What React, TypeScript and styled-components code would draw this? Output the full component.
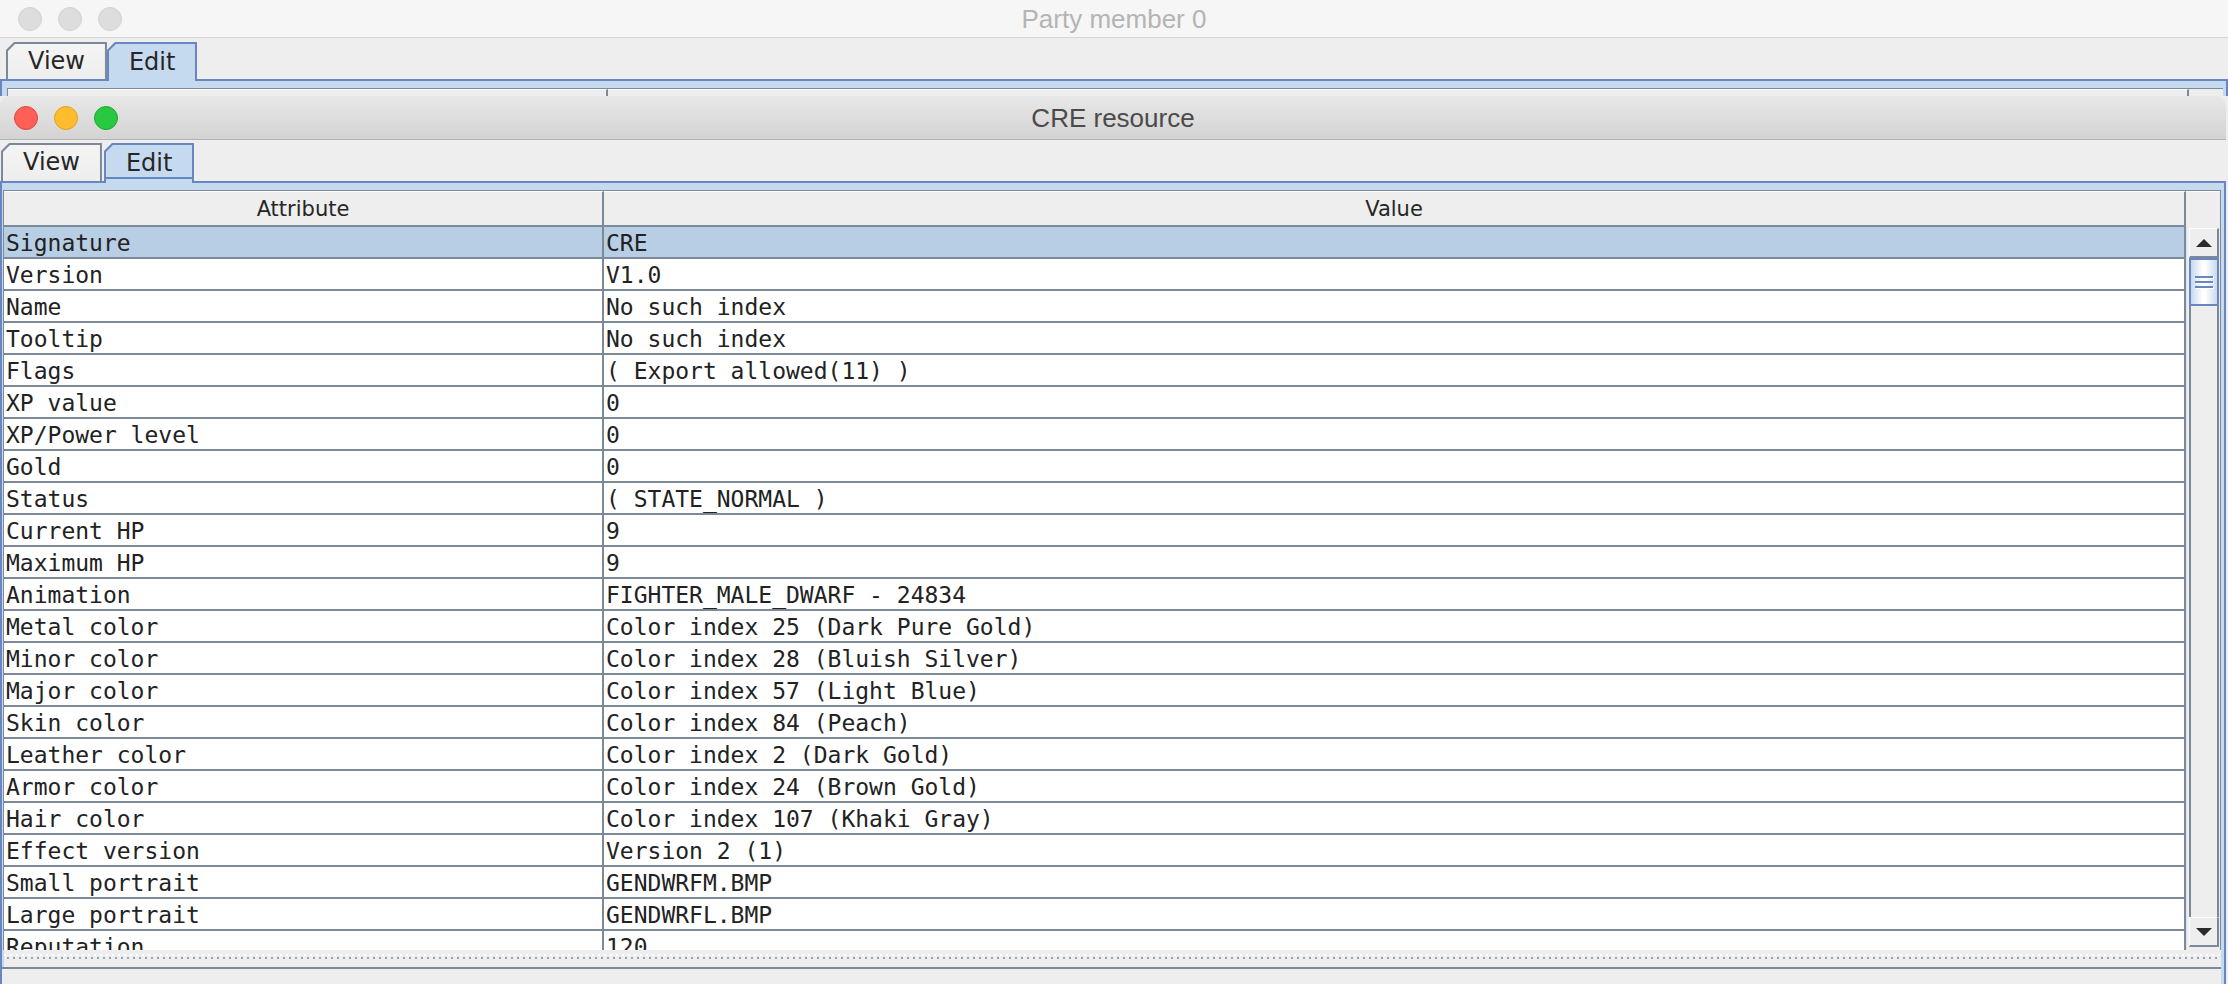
import React from "react";
import styled, { createGlobalStyle } from "styled-components";

const BLUE = "#6a86c1";
const LIGHT_BLUE = "#c6daef";
const GRID = "#7b8998";
const PANEL = "#eeeeee";

const rows: [string, string][] = [
  ["Signature", "CRE"],
  ["Version", "V1.0"],
  ["Name", "No such index"],
  ["Tooltip", "No such index"],
  ["Flags", "( Export allowed(11) )"],
  ["XP value", "0"],
  ["XP/Power level", "0"],
  ["Gold", "0"],
  ["Status", "( STATE_NORMAL )"],
  ["Current HP", "9"],
  ["Maximum HP", "9"],
  ["Animation", "FIGHTER_MALE_DWARF - 24834"],
  ["Metal color", "Color index 25 (Dark Pure Gold)"],
  ["Minor color", "Color index 28 (Bluish Silver)"],
  ["Major color", "Color index 57 (Light Blue)"],
  ["Skin color", "Color index 84 (Peach)"],
  ["Leather color", "Color index 2 (Dark Gold)"],
  ["Armor color", "Color index 24 (Brown Gold)"],
  ["Hair color", "Color index 107 (Khaki Gray)"],
  ["Effect version", "Version 2 (1)"],
  ["Small portrait", "GENDWRFM.BMP"],
  ["Large portrait", "GENDWRFL.BMP"],
  ["Reputation", "120"],
];

const App = () => {
  return (
    <Page>
      <GlobalStyle />
      <BackWindow>
        <TitleBar $active={false}>
          <Lights $inset={18}>
            <Light $fill="#dddddd" $ring="#d2d2d2" />
            <Light $fill="#dddddd" $ring="#d2d2d2" />
            <Light $fill="#dddddd" $ring="#d2d2d2" />
          </Lights>
          <Title $active={false}>Party member 0</Title>
        </TitleBar>
        <TabStrip $inset={6} $gap={0} $height={41}>
          <Tab $height={37}>
            <TabFace>View</TabFace>
          </Tab>
          <Tab $height={37} $selected>
            <TabFace $selected>Edit</TabFace>
          </Tab>
        </TabStrip>
        <TabBody>
          <BackHeader>
            <BackHeaderCell $width={600} />
            <BackHeaderCell $width={1581} />
          </BackHeader>
        </TabBody>
      </BackWindow>

      <FrontWindow>
        <TitleBar $active>
          <Lights $inset={14}>
            <Light $fill="#fe5f57" $ring="#e2463f" />
            <Light $fill="#febc2e" $ring="#dfa123" />
            <Light $fill="#28c840" $ring="#1aab29" />
          </Lights>
          <Title $active>CRE resource</Title>
        </TitleBar>
        <TabStrip $inset={1} $gap={2} $height={41}>
          <Tab $height={38}>
            <TabFace>View</TabFace>
          </Tab>
          <Tab $height={38} $selected>
            <TabFace $selected $focused>
              Edit
            </TabFace>
          </Tab>
        </TabStrip>
        <TabBody $grow>
          <ScrollPane>
            <HeaderRow>
              <HeaderCell $width={600}>Attribute</HeaderCell>
              <HeaderCell>Value</HeaderCell>
              <HeaderCorner />
            </HeaderRow>
            <Viewport>
              <Rows>
                {rows.map(([attr, value], i) => (
                  <Row key={attr} $selected={i === 0}>
                    <AttrCell>{attr}</AttrCell>
                    <ValueCell>{value}</ValueCell>
                  </Row>
                ))}
              </Rows>
              <ScrollBar>
                <ArrowButton>
                  <Arrow $up />
                </ArrowButton>
                <Thumb>
                  <Grip />
                  <Grip />
                  <Grip />
                </Thumb>
                <Track />
                <ArrowButton>
                  <Arrow />
                </ArrowButton>
              </ScrollBar>
            </Viewport>
          </ScrollPane>
          <Divider />
          <BottomPanel />
        </TabBody>
      </FrontWindow>
    </Page>
  );
};

export default App;

const GlobalStyle = createGlobalStyle`
  html, body {
    margin: 0;
    padding: 0;
    overflow: hidden;
    background: ${PANEL};
  }
  * {
    box-sizing: border-box;
  }
`;

const Page = styled.div`
  width: 2228px;
  height: 984px;
  display: flex;
  flex-direction: column;
  overflow: hidden;
  background: ${PANEL};
`;

const BackWindow = styled.div`
  height: 96px;
  flex-shrink: 0;
  overflow: hidden;
  display: flex;
  flex-direction: column;
  background: ${PANEL};
`;

const FrontWindow = styled.div`
  width: 2226px;
  height: 888px;
  display: flex;
  flex-direction: column;
  border-radius: 10px 10px 0 0;
  overflow: hidden;
  background: ${PANEL};
`;

const TitleBar = styled.div<{ $active: boolean }>`
  position: relative;
  flex-shrink: 0;
  height: ${(p) => (p.$active ? "44px" : "38px")};
  display: flex;
  align-items: center;
  justify-content: center;
  border-bottom: 1px solid ${(p) => (p.$active ? "#b3b3b3" : "#d6d6d6")};
  background: ${(p) =>
    p.$active ? "linear-gradient(#e8e8e8, #d3d3d3)" : "#f6f6f6"};
`;

const Lights = styled.div<{ $inset: number }>`
  position: absolute;
  left: ${(p) => p.$inset}px;
  top: 0;
  bottom: 0;
  display: flex;
  align-items: center;
  gap: 16px;
`;

const Light = styled.div<{ $fill: string; $ring: string }>`
  width: 24px;
  height: 24px;
  border-radius: 50%;
  background: ${(p) => p.$fill};
  border: 1px solid ${(p) => p.$ring};
`;

const Title = styled.div<{ $active: boolean }>`
  font-family: "Liberation Sans", Arial, sans-serif;
  font-size: 26px;
  color: ${(p) => (p.$active ? "#4a4a4a" : "#b4b4b4")};
  padding-top: 2px;
`;

const TabStrip = styled.div<{ $inset: number; $gap: number; $height: number }>`
  position: relative;
  z-index: 1;
  flex-shrink: 0;
  height: ${(p) => p.$height}px;
  display: flex;
  align-items: flex-end;
  padding-left: ${(p) => p.$inset}px;
  gap: ${(p) => p.$gap}px;
  background: ${PANEL};
`;

const Tab = styled.div<{ $selected?: boolean; $height: number }>`
  height: ${(p) => p.$height + (p.$selected ? 2 : 0)}px;
  margin-bottom: ${(p) => (p.$selected ? "-2px" : "0")};
  padding: 2px 2px 0 2px;
  background: ${(p) => (p.$selected ? BLUE : GRID)};
  clip-path: polygon(8px 0, 100% 0, 100% 100%, 0 100%, 0 8px);
`;

const TabFace = styled.div<{ $selected?: boolean; $focused?: boolean }>`
  height: 100%;
  display: flex;
  align-items: center;
  padding: 0 20px 2px 20px;
  font-family: "DejaVu Sans", Verdana, sans-serif;
  font-size: 24px;
  color: #262626;
  clip-path: polygon(7px 0, 100% 0, 100% 100%, 0 100%, 0 7px);
  background: ${(p) =>
    p.$focused
      ? `linear-gradient(to top, ${LIGHT_BLUE} 0 4px, ${BLUE} 4px 6px, ${LIGHT_BLUE} 6px)`
      : p.$selected
      ? LIGHT_BLUE
      : `linear-gradient(#f4f4f4, ${PANEL})`};
`;

const TabBody = styled.div<{ $grow?: boolean }>`
  flex: ${(p) => (p.$grow ? "1" : "none")};
  min-height: 0;
  display: flex;
  flex-direction: column;
  border-top: 2px solid ${BLUE};
  border-left: 2px solid ${BLUE};
  border-right: 2px solid ${BLUE};
  padding: 7px 3px 0 1px;
  background: ${LIGHT_BLUE};
`;

const BackHeader = styled.div`
  display: flex;
  height: 20px;
  margin-left: 4px;
  border-top: 1px solid ${GRID};
  border-left: 1px solid ${GRID};
  background: ${PANEL};
`;

const BackHeaderCell = styled.div<{ $width: number }>`
  width: ${(p) => p.$width}px;
  border-right: 2px solid ${GRID};
  border-top: 1px solid #ffffff;
`;

const ScrollPane = styled.div`
  flex: 1;
  min-height: 0;
  display: flex;
  flex-direction: column;
  border: 1px solid ${GRID};
  border-bottom: none;
  background: ${PANEL};
`;

const HeaderRow = styled.div`
  flex-shrink: 0;
  height: 36px;
  display: flex;
`;

const HeaderCell = styled.div<{ $width?: number }>`
  ${(p) => (p.$width ? `width: ${p.$width}px;` : "flex: 1;")}
  display: flex;
  align-items: center;
  justify-content: center;
  border-right: 2px solid ${GRID};
  border-bottom: 2px solid ${GRID};
  border-top: 1px solid #ffffff;
  font-family: "DejaVu Sans", Verdana, sans-serif;
  font-size: 21px;
  color: #262626;
  background: ${PANEL};
`;

const HeaderCorner = styled.div`
  width: 34px;
  border-top: 1px solid #ffffff;
  background: ${PANEL};
`;

const Viewport = styled.div`
  flex: 1;
  min-height: 0;
  display: flex;
  overflow: hidden;
`;

const Rows = styled.div`
  flex: 1;
  display: flex;
  flex-direction: column;
  background: #ffffff;
`;

const Row = styled.div<{ $selected: boolean }>`
  flex-shrink: 0;
  height: 32px;
  display: flex;
  border-bottom: 2px solid ${GRID};
  background: ${(p) => (p.$selected ? "#b8cee5" : "#ffffff")};
  font-family: "DejaVu Sans Mono", Menlo, monospace;
  font-size: 23px;
  line-height: 32px;
  color: #222222;
`;

const AttrCell = styled.div`
  width: 600px;
  padding-left: 2px;
  border-right: 2px solid ${GRID};
  white-space: pre;
  overflow: hidden;
`;

const ValueCell = styled.div`
  flex: 1;
  padding-left: 2px;
  border-right: 2px solid ${GRID};
  white-space: pre;
  overflow: hidden;
`;

const ScrollBar = styled.div`
  width: 34px;
  display: flex;
  flex-direction: column;
  padding: 1px 1px 3px 2px;
  border-left: 1px solid #d8e4f1;
  background: ${PANEL};
`;

const ArrowButton = styled.div`
  flex-shrink: 0;
  height: 30px;
  display: flex;
  align-items: center;
  justify-content: center;
  border-top: 1px solid #ffffff;
  border-left: 1px solid #ffffff;
  border-right: 2px solid ${GRID};
  border-bottom: 2px solid ${GRID};
  background: ${PANEL};
`;

const Arrow = styled.div<{ $up?: boolean }>`
  width: 0;
  height: 0;
  border-left: 8px solid transparent;
  border-right: 8px solid transparent;
  ${(p) =>
    p.$up
      ? "border-bottom: 8px solid #2b2b2b;"
      : "border-top: 8px solid #2b2b2b;"}
`;

const Thumb = styled.div`
  flex-shrink: 0;
  height: 48px;
  display: flex;
  flex-direction: column;
  align-items: center;
  justify-content: center;
  gap: 3px;
  border: 2px solid ${BLUE};
  background: linear-gradient(90deg, ${LIGHT_BLUE}, #ffffff 45%, #ffffff 55%, ${LIGHT_BLUE});
`;

const Grip = styled.div`
  width: 18px;
  height: 2px;
  background: ${BLUE};
  box-shadow: 1px 1px 0 #ffffff;
`;

const Track = styled.div`
  flex: 1;
  border-left: 2px solid ${GRID};
  border-right: 2px solid ${GRID};
  background: ${PANEL};
`;

const Divider = styled.div`
  flex-shrink: 0;
  height: 17px;
  margin-left: 1px;
  background:
    linear-gradient(90deg, #9aa4b0 2px, transparent 2px) 3px 7px / 6px 2px repeat-x,
    linear-gradient(90deg, #ffffff 2px, transparent 2px) 0 4px / 6px 2px repeat-x,
    ${PANEL};
`;

const BottomPanel = styled.div`
  flex-shrink: 0;
  height: 17px;
  margin-left: -1px;
  border-top: 2px solid ${GRID};
  background: ${PANEL};
`;
